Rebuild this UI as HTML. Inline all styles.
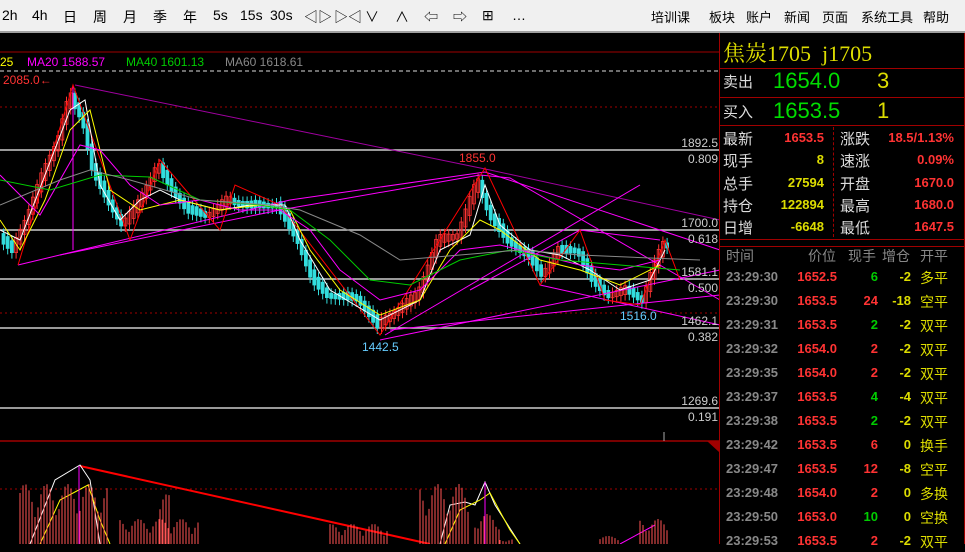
<!DOCTYPE html>
<html><head><meta charset="utf-8"><style>
body{margin:0;width:965px;height:544px;overflow:hidden;background:#000;font-family:"Liberation Sans","Noto Sans CJK SC",sans-serif;position:relative}
#tb{position:absolute;left:0;top:0;width:965px;height:31px;background:#f0f0f0;border-bottom:2px solid #a0a0a0;z-index:3}
#tb span{position:absolute;top:7px;font-size:14px;color:#000}
.t{position:absolute;white-space:nowrap}
</style></head><body>
<div id="tb">
<span style="left:2px">2h</span><span style="left:32px">4h</span><span style="left:63px">日</span><span style="left:93px">周</span><span style="left:123px">月</span><span style="left:153px">季</span><span style="left:183px">年</span><span style="left:213px">5s</span><span style="left:240px">15s</span><span style="left:270px">30s</span><span style="left:304px">◁▷</span><span style="left:334px">▷◁</span><span style="left:365px">∨</span><span style="left:395px">∧</span><span style="left:424px">⇦</span><span style="left:453px">⇨</span><span style="left:482px">⊞</span><span style="left:512px">…</span>
<span style="left:651px;font-size:13px">培训课</span><span style="left:709px;font-size:13px">板块</span><span style="left:746px;font-size:13px">账户</span><span style="left:784px;font-size:13px">新闻</span><span style="left:822px;font-size:13px">页面</span><span style="left:861px;font-size:13px">系统工具</span><span style="left:923px;font-size:13px">帮助</span>
</div>
<svg id="ch" width="965" height="544" style="position:absolute;left:0;top:0" xmlns="http://www.w3.org/2000/svg">
<line x1="0" y1="52" x2="720" y2="52" stroke="#a00000"/>
<line x1="0" y1="71" x2="720" y2="71" stroke="#ddd" stroke-dasharray="4,3"/>
<line x1="0" y1="107" x2="720" y2="107" stroke="#a00000" stroke-dasharray="2,3"/>
<line x1="0" y1="150" x2="720" y2="150" stroke="#ccc" stroke-width="1.5"/>
<line x1="0" y1="230" x2="720" y2="230" stroke="#ccc" stroke-width="1.5"/>
<line x1="0" y1="279" x2="720" y2="279" stroke="#ccc" stroke-width="1.5"/>
<line x1="0" y1="313" x2="720" y2="313" stroke="#a00000" stroke-dasharray="2,3"/>
<line x1="0" y1="328" x2="720" y2="328" stroke="#ccc" stroke-width="1.5"/>
<line x1="0" y1="408" x2="720" y2="408" stroke="#ccc" stroke-width="1.5"/>
<line x1="0" y1="441" x2="720" y2="441" stroke="#a00000" stroke-width="1.5"/>
<line x1="0" y1="489" x2="720" y2="489" stroke="#a00000" stroke-dasharray="2,3"/>
<line x1="664" y1="432" x2="664" y2="441" stroke="#aaa"/>
<polygon points="707,441 719,441 719,452" fill="#a00000"/>
<g id="cd"></g>
<g fill="none" stroke-width="1">
<polyline stroke="#a000a0" points="75,85 490,170 720,220"/>
<polyline stroke="#f0f" points="18,265 290,200 485,172 720,250"/>
<polyline stroke="#f0f" points="60,255 280,210 480,175"/>
<polyline stroke="#f0f" points="380,340 720,270"/>
<polyline stroke="#f0f" points="390,330 720,295"/>
<polyline stroke="#f0f" points="385,335 640,185"/>
<polyline stroke="#f0f" points="480,175 510,178 720,300"/>
<polyline stroke="#f0f" points="540,285 720,325"/>
<polyline stroke="#f0f" points="470,290 580,230 660,240"/>
<polyline stroke="#f0f" points="73,85 73,250"/>
<polyline stroke="#f00" points="18,265 73,85 130,240 160,160 220,230 235,185 280,205 380,335 485,168 540,285 580,230 605,300 640,305 665,240 680,280"/>
<polyline stroke="#fff" points="0,230 20,240 45,175 70,110 85,100 100,185 120,220 140,200 160,190 180,200 220,210 250,205 285,205 300,240 330,290 380,320 420,300 440,250 470,235 485,185 500,225 530,250 560,255 590,270 620,290 650,280 665,250"/>
<polyline stroke="#ff0" points="0,220 20,250 45,200 70,130 90,110 110,190 140,210 180,200 220,210 260,205 290,210 310,250 340,290 380,315 420,300 450,250 480,220 500,230 540,260 580,270 620,285 660,265"/>
<polyline stroke="#f0f" points="0,175 40,215 80,145 100,150 130,185 160,205 200,200 240,210 280,210 310,230 340,270 380,300 420,290 460,250 500,245 540,255 580,265 620,270 660,260"/>
<polyline stroke="#0c0" points="0,180 50,190 100,175 150,177 200,200 260,205 290,210 330,240 370,280 410,285 460,260 510,250 560,260 620,265 680,270"/>
<polyline stroke="#888" points="0,205 60,180 90,170 130,180 200,200 270,205 300,210 360,235 400,260 460,255 520,250 580,255 650,258 700,260"/>
<polyline stroke="#f00" stroke-width="2" points="80,466 430,544"/>
<polyline stroke="#fff" points="30,544 55,480 80,465 90,480 100,544"/>
<polyline stroke="#ff0" points="40,544 60,500 88,485 100,520 110,544"/>
<polyline stroke="#fff" points="440,544 450,505 465,502 475,505 485,482 495,505 520,544"/>
<polyline stroke="#ff0" points="445,544 460,510 480,500 490,493 510,530 520,544"/>
<polyline stroke="#f0f" points="620,544 655,525"/>
<line x1="79" y1="466" x2="79" y2="544" stroke="#f0f"/><line x1="485" y1="482" x2="485" y2="544" stroke="#f0f"/>
</g>
<g id="vol"></g>
<g font-size="12" font-family="Liberation Sans,sans-serif">
<text x="0" y="66" fill="#ff0">25</text><text x="27" y="66" fill="#f0f">MA20 1588.57</text><text x="126" y="66" fill="#0c0">MA40 1601.13</text><text x="225" y="66" fill="#888">MA60 1618.61</text>
<text x="3" y="84" fill="#f33">2085.0←</text>
<text x="459" y="162" fill="#f33">1855.0</text>
<text x="362" y="351" fill="#6cf">1442.5</text>
<text x="620" y="320" fill="#6cf">1516.0</text>
<g fill="#ccc" text-anchor="end"><text x="718" y="147">1892.5</text><text x="718" y="163">0.809</text><text x="718" y="227">1700.0</text><text x="718" y="243">0.618</text><text x="718" y="276">1581.1</text><text x="718" y="292">0.500</text><text x="718" y="325">1462.1</text><text x="718" y="341">0.382</text><text x="718" y="405">1269.6</text><text x="718" y="421">0.191</text></g>
</g>
</svg>
<div style="position:absolute;left:719px;top:33px;width:244px;height:511px;background:#000;border-left:1px solid #a00000;border-right:2px solid #a00000">
<div class="t" style="left:3px;top:4px;font-size:22px;color:#dd0;font-family:'Liberation Serif','Noto Serif CJK SC',serif">焦炭1705&nbsp; j1705</div>
<div style="position:absolute;left:0;top:35px;width:244px;border-top:1px solid #a00000"></div>
<div style="position:absolute;left:0;top:64px;width:244px;border-top:1px solid #a00000"></div>
<div style="position:absolute;left:0;top:92px;width:244px;border-top:1px solid #a00000"></div>
<div style="position:absolute;left:0;top:206px;width:244px;border-top:1px solid #a00000"></div>
<div style="position:absolute;left:0;top:213px;width:244px;border-top:1px solid #a00000"></div>
<div style="position:absolute;left:113px;top:94px;height:110px;border-left:1px dashed #a00000"></div>
<div class="t" style="left:3px;top:38px;font-size:15px;color:#ddd">卖出</div><div class="t" style="left:53px;top:35px;font-size:22px;color:#0d0">1654.0</div><div class="t" style="left:157px;top:35px;font-size:22px;color:#dd0">3</div>
<div class="t" style="left:3px;top:68px;font-size:15px;color:#ddd">买入</div><div class="t" style="left:53px;top:65px;font-size:22px;color:#0d0">1653.5</div><div class="t" style="left:157px;top:65px;font-size:22px;color:#dd0">1</div>
<div id="st"></div>
<div class="t" style="left:6px;top:213px;font-size:14px;color:#888">时间</div><div class="t" style="left:88px;top:213px;font-size:14px;color:#888">价位</div><div class="t" style="left:128px;top:213px;font-size:14px;color:#888">现手</div><div class="t" style="left:162px;top:213px;font-size:14px;color:#888">增仓</div><div class="t" style="left:200px;top:213px;font-size:14px;color:#888">开平</div>
<div id="tr"></div>
</div>
<script>
(function(){
var st=[["最新","1653.5","#f33","涨跌","18.5/1.13%"],["现手","8","#dd0","速涨","0.09%"],["总手","27594","#dd0","开盘","1670.0"],["持仓","122894","#dd0","最高","1680.0"],["日增","-6648","#dd0","最低","1647.5"]];
var h="";st.forEach(function(r,i){var y=95+i*22.3;h+='<div class="t" style="left:3px;top:'+y+'px;font-size:15px;color:#ddd">'+r[0]+'</div><div class="t" style="right:140px;top:'+(y+2)+'px;font-size:13px;font-weight:bold;color:'+r[2]+'">'+r[1]+'</div><div class="t" style="left:120px;top:'+y+'px;font-size:15px;color:#ddd">'+r[3]+'</div><div class="t" style="right:10px;top:'+(y+2)+'px;font-size:13px;font-weight:bold;color:#f33">'+r[4]+'</div>';});
document.getElementById('st').innerHTML=h;
var tr=[["23:29:30","1652.5","6","#0c0","-2","多平"],["23:29:30","1653.5","24","#f33","-18","空平"],["23:29:31","1653.5","2","#0c0","-2","双平"],["23:29:32","1654.0","2","#f33","-2","双平"],["23:29:35","1654.0","2","#f33","-2","双平"],["23:29:37","1653.5","4","#0c0","-4","双平"],["23:29:38","1653.5","2","#0c0","-2","双平"],["23:29:42","1653.5","6","#f33","0","换手"],["23:29:47","1653.5","12","#f33","-8","空平"],["23:29:48","1654.0","2","#f33","0","多换"],["23:29:50","1653.0","10","#0c0","0","空换"],["23:29:53","1653.5","2","#f33","-2","双平"]];
h="";tr.forEach(function(r,i){var y=236+i*24;h+='<div class="t" style="left:6px;top:'+y+'px;font-size:13px;font-weight:bold;color:#888">'+r[0]+'</div><div class="t" style="right:127px;top:'+y+'px;font-size:13px;font-weight:bold;color:#f33">'+r[1]+'</div><div class="t" style="right:86px;top:'+y+'px;font-size:13px;font-weight:bold;color:'+r[3]+'">'+r[2]+'</div><div class="t" style="right:53px;top:'+y+'px;font-size:13px;font-weight:bold;color:#dd0">'+r[4]+'</div><div class="t" style="left:200px;top:'+(y-1)+'px;font-size:14px;color:#dd0">'+r[5]+'</div>';});
document.getElementById('tr').innerHTML=h;
var pts=[[0,235],[15,250],[30,215],[45,175],[60,140],[72,95],[85,120],[95,170],[110,200],[125,225],[140,205],[160,165],[175,190],[190,210],[210,215],[230,200],[250,205],[280,205],[300,240],[315,280],[330,295],[360,298],[380,325],[400,310],[420,295],[440,240],[460,235],[480,180],[492,215],[510,240],[530,255],[545,275],[560,250],[580,250],[595,280],[610,295],[630,290],[645,300],[655,270],[665,245]];
function py(x){for(var i=1;i<pts.length;i++){if(x<=pts[i][0]){var a=pts[i-1],b=pts[i];return a[1]+(b[1]-a[1])*(x-a[0])/(b[0]-a[0]);}}return 245;}
var s="",v="";
for(var x=2;x<668;x+=4.2){var y=py(x),yb=py(x+4.2),c=(yb<y)?"#f33":"#3dd";var sd=Math.sin(x*1.7)*6;var tp=Math.min(y,yb)-3+sd*0.3,bt=Math.max(y,yb)+3;
s+='<line x1="'+(x+1.5)+'" y1="'+(tp-5)+'" x2="'+(x+1.5)+'" y2="'+(bt+6)+'" stroke="'+c+'"/><rect x="'+x+'" y="'+tp+'" width="3" height="'+(bt-tp)+'" fill="'+(c=="#f33"?"none":c)+'" stroke="'+c+'" stroke-width="0.8"/>';}
document.getElementById('cd').innerHTML=s;
var vb=[[20,110,60],[120,200,25],[330,390,20],[420,470,60],[475,500,30],[640,670,25],[160,170,50],[500,515,5],[600,620,8]];
vb.forEach(function(b){for(var x=b[0];x<b[1];x+=3){var hh=b[2]*(0.4+0.6*Math.abs(Math.sin(x*0.9)));v+='<line x1="'+x+'" y1="544" x2="'+x+'" y2="'+(544-hh)+'" stroke="#f55"/>';}});
document.getElementById('vol').innerHTML=v;
})();
</script>
</body></html>
